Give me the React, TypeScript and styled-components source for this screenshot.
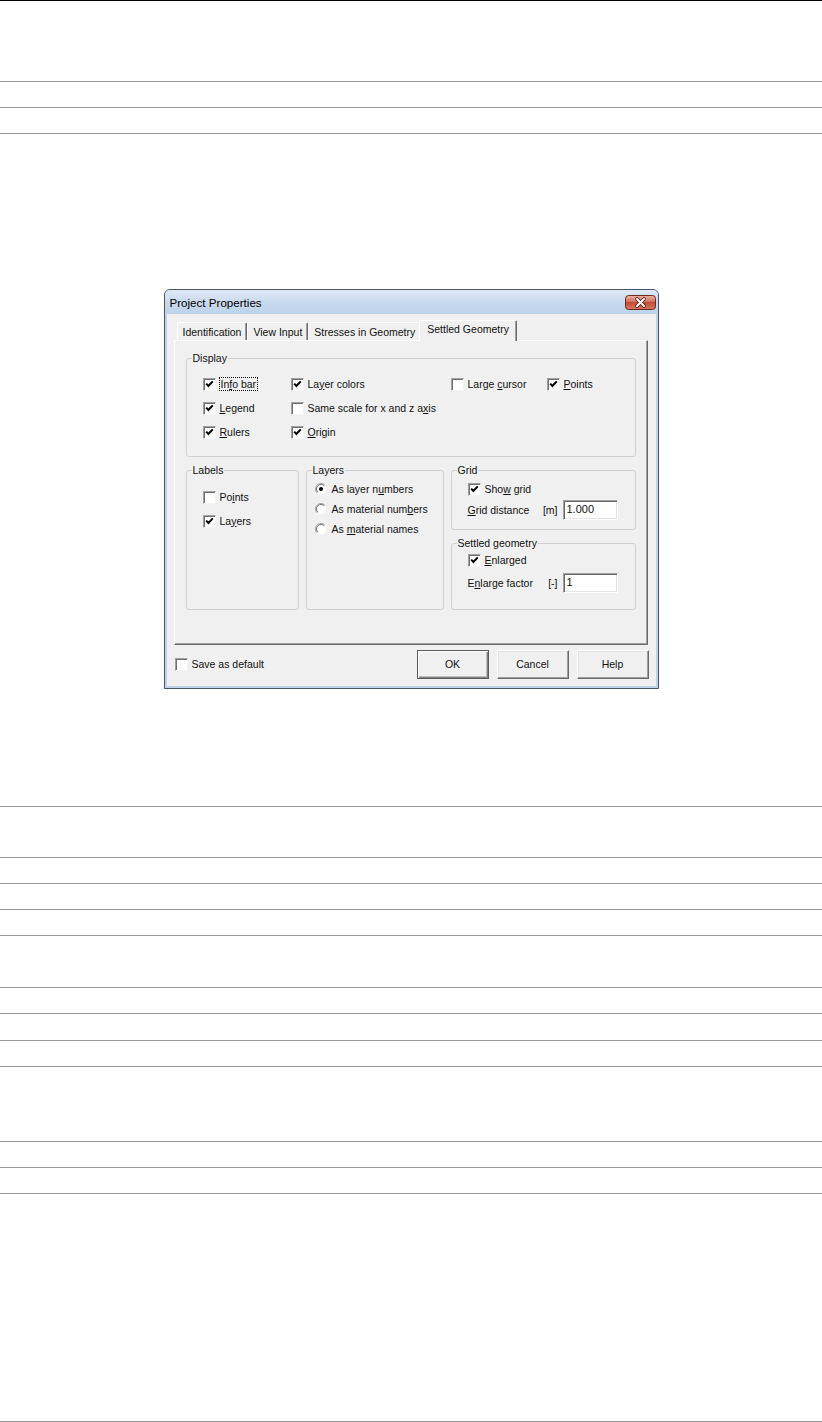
import React from "react";
import styled, { createGlobalStyle } from "styled-components";

const GlobalStyle = createGlobalStyle`
  html, body {
    margin: 0;
    padding: 0;
    background: #fff;
  }
  body {
    font-family: "Liberation Sans", Arial, sans-serif;
  }
`;

/* ---------- page (empty table rows) ---------- */

const Sheet = styled.div`
  width: 822px;
  display: flex;
  flex-direction: column;
  border-top: 1px solid #000;
`;

const Row = styled.div<{ $h: number }>`
  box-sizing: border-box;
  height: ${(p) => p.$h}px;
  border-bottom: 1px solid #999;
`;

const FigureRow = styled(Row)`
  display: flex;
  justify-content: center;
  align-items: flex-start;
  padding-top: 155px;
`;

/* ---------- dialog window ---------- */

const Window = styled.div`
  width: 493px;
  display: flex;
  flex-direction: column;
  border: 1px solid #4a5562;
  border-radius: 6px 6px 0 0;
  background: #c0d3ea;
  font-family: "Liberation Sans", Arial, sans-serif;
  font-size: 10.5px;
  line-height: 13px;
  color: #111;
  overflow: hidden;
`;

const TitleBar = styled.div`
  height: 24px;
  display: flex;
  align-items: center;
  justify-content: space-between;
  padding: 0 2px 0 5px;
  background: linear-gradient(#dfe9f5, #c8d9ee 55%, #bdd2ea);
`;

const Title = styled.span`
  font-size: 11.6px;
  color: #000;
`;

const Client = styled.div`
  margin: 0 2px 2px 2px;
  height: 372px;
  box-sizing: border-box;
  background: #f0f0f0;
  display: flex;
  flex-direction: column;
  padding: 6px 6px 7px 7px;
`;

const TabStrip = styled.div`
  height: 20px;
  display: flex;
  align-items: flex-end;
  padding-left: 3px;
  position: relative;
  z-index: 1;
`;

const Tab = styled.div<{ $active?: boolean }>`
  box-sizing: border-box;
  height: ${(p) => (p.$active ? 21 : 18)}px;
  margin: ${(p) => (p.$active ? "0 -2px -1px -2px" : "0")};
  padding: ${(p) => (p.$active ? "2px 7px 0 7px" : "3px 5px 0 5px")};
  background: #f0f0f0;
  border-top: 1px solid #fff;
  border-left: 1px solid #fff;
  border-right: 1px solid #696969;
  border-radius: 2px 2px 0 0;
  box-shadow: inset -1px 0 0 #a0a0a0;
  white-space: nowrap;
`;

const Panel = styled.div`
  box-sizing: border-box;
  width: 474px;
  height: 305px;
  display: flex;
  flex-direction: column;
  gap: 7px;
  padding: 11px 11px 0 11px;
  border-top: 1px solid #fff;
  border-left: 1px solid #fff;
  border-right: 1px solid #696969;
  border-bottom: 1px solid #696969;
  box-shadow: inset -1px -1px 0 #a0a0a0;
`;

const Group = styled.fieldset<{ $grow?: boolean }>`
  margin: 0;
  padding: 0;
  min-width: 0;
  box-sizing: border-box;
  border: 1px solid #d0d0d0;
  border-radius: 3px;
  ${(p) => (p.$grow ? "flex: 1;" : "")}
`;

const Legend = styled.legend`
  margin-left: 5px;
  padding: 0 1px;
  line-height: 13px;
`;

const GroupBody = styled.div<{ $pad: string }>`
  padding: ${(p) => p.$pad};
`;

const DisplayGrid = styled.div`
  display: grid;
  grid-template-columns: 88px 160px 96px auto;
  grid-auto-rows: 24px;
`;

const LowerRow = styled.div`
  height: 146px;
  display: grid;
  grid-template-columns: 113px 138px 185px;
  column-gap: 7px;
`;

const RightColumn = styled.div`
  display: flex;
  flex-direction: column;
  gap: 7px;
`;

const Item = styled.label<{ $h?: number }>`
  height: ${(p) => p.$h ?? 24}px;
  display: flex;
  align-items: center;
  gap: 4px;
  white-space: nowrap;
`;

const RadioItem = styled(Item)`
  gap: 5px;
`;

const Box = styled.span`
  box-sizing: border-box;
  width: 13px;
  height: 13px;
  flex: none;
  display: inline-flex;
  background: #fff;
  border: 1px solid;
  border-color: #a0a0a0 #f4f4f4 #f4f4f4 #a0a0a0;
  box-shadow: inset 1px 1px 0 #707070;
`;

const Focus = styled.span`
  outline: 1px dotted #000;
  outline-offset: 0;
  padding: 0 1px;
`;

const FieldRow = styled.div<{ $mt?: number }>`
  height: 22px;
  margin-top: ${(p) => p.$mt ?? 0}px;
  display: flex;
  align-items: center;
  white-space: nowrap;
`;

const FieldLabel = styled.span`
  flex: 1;
`;

const Unit = styled.span`
  margin-right: 5px;
`;

const TextInput = styled.div`
  box-sizing: border-box;
  width: 55px;
  height: 20px;
  padding: 2px 3px 0 3px;
  background: #fff;
  border: 1px solid;
  border-color: #a0a0a0 #fff #fff #a0a0a0;
  box-shadow: inset 1px 1px 0 #696969, inset -1px -1px 0 #e3e3e3;
  font-size: 11px;
`;

const Footer = styled.div`
  margin-top: 5px;
  height: 29px;
  display: flex;
  align-items: center;
  padding-left: 1px;
  padding-right: 1px;
`;

const FooterCheck = styled(Item)`
  flex: 1;
`;

const Buttons = styled.div`
  display: flex;
  gap: 8px;
  height: 100%;
`;

const Button = styled.button<{ $default?: boolean }>`
  box-sizing: border-box;
  width: 72px;
  height: 29px;
  font: inherit;
  color: #111;
  background: #f0f0f0;
  border: 1px solid;
  border-color: ${(p) =>
    p.$default ? "#5a5a5a" : "#fff #696969 #696969 #fff"};
  box-shadow: ${(p) =>
    p.$default
      ? "inset 1px 1px 0 #fff, inset -1px -1px 0 #808080, inset -2px -2px 0 #c0c0c0"
      : "inset -1px -1px 0 #a0a0a0, inset 1px 1px 0 #e3e3e3"};
  padding: 0;
`;

/* ---------- little drawings ---------- */

const CloseGlyph = () => (
  <svg width="31" height="15" viewBox="0 0 31 15">
    <defs>
      <linearGradient id="cls" x1="0" y1="0" x2="0" y2="1">
        <stop offset="0" stopColor="#eab2a4" />
        <stop offset="0.45" stopColor="#d2725f" />
        <stop offset="0.5" stopColor="#c44a36" />
        <stop offset="1" stopColor="#d77a5e" />
      </linearGradient>
    </defs>
    <rect x="0.5" y="0.5" width="30" height="14" rx="3" fill="url(#cls)" stroke="#6b2a1f" />
    <path d="M12 4 L19 11 M19 4 L12 11" stroke="#4a1c14" strokeWidth="3.6" strokeLinecap="round" />
    <path d="M12 4 L19 11 M19 4 L12 11" stroke="#fff" strokeWidth="2" strokeLinecap="round" />
  </svg>
);

const Check = ({ on }: { on?: boolean }) => (
  <Box>
    {on && (
      <svg width="11" height="11" viewBox="0 0 11 11">
        <path d="M2.2 4.6 L4.4 7 L8.8 2.4" fill="none" stroke="#000" strokeWidth="2" />
      </svg>
    )}
  </Box>
);

const Radio = ({ on }: { on?: boolean }) => (
  <svg width="12" height="12" viewBox="0 0 12 12" style={{ flex: "none" }}>
    <circle cx="6" cy="6" r="5.5" fill="#fff" />
    <path d="M2.1 9.9 A5.5 5.5 0 0 1 9.9 2.1" fill="none" stroke="#a0a0a0" />
    <path d="M9.9 2.1 A5.5 5.5 0 0 1 2.1 9.9" fill="none" stroke="#f4f4f4" />
    <path d="M2.8 9.2 A4.5 4.5 0 0 1 9.2 2.8" fill="none" stroke="#707070" />
    {on && <circle cx="6" cy="6" r="2" fill="#000" />}
  </svg>
);

/* ---------- data ---------- */

const rowsBefore = [81, 26, 26];
const rowsAfter = [51, 26, 26, 26, 52, 26, 27, 26, 75, 26, 26, 228];

type Opt = { on: boolean; label: React.ReactNode };

const display: Opt[] = [
  { on: true, label: <Focus>In<u>f</u>o bar</Focus> },
  { on: true, label: <>La<u>y</u>er colors</> },
  { on: false, label: <>Large <u>c</u>ursor</> },
  { on: true, label: <><u>P</u>oints</> },
  { on: true, label: <><u>L</u>egend</> },
  { on: false, label: <>Same scale for x and z a<u>x</u>is</> },
  { on: false, label: null },
  { on: false, label: null },
  { on: true, label: <><u>R</u>ulers</> },
  { on: true, label: <><u>O</u>rigin</> },
];

const ProjectProperties = () => (
  <Window>
    <TitleBar>
      <Title>Project Properties</Title>
      <CloseGlyph />
    </TitleBar>
    <Client>
      <TabStrip>
        <Tab>Identification</Tab>
        <Tab>View Input</Tab>
        <Tab>Stresses in Geometry</Tab>
        <Tab $active>Settled Geometry</Tab>
      </TabStrip>
      <Panel>
        <Group>
          <Legend>Display</Legend>
          <GroupBody $pad="7px 0 12px 16px">
            <DisplayGrid>
              {display.map((d, i) =>
                d.label ? (
                  <Item key={i}>
                    <Check on={d.on} />
                    <span>{d.label}</span>
                  </Item>
                ) : (
                  <span key={i} />
                )
              )}
            </DisplayGrid>
          </GroupBody>
        </Group>

        <LowerRow>
          <Group>
            <Legend>Labels</Legend>
            <GroupBody $pad="8px 0 0 16px">
              <Item>
                <Check />
                <span>Po<u>i</u>nts</span>
              </Item>
              <Item>
                <Check on />
                <span>La<u>y</u>ers</span>
              </Item>
            </GroupBody>
          </Group>

          <Group>
            <Legend>Layers</Legend>
            <GroupBody $pad="2px 0 0 8px">
              <RadioItem $h={20}>
                <Radio on />
                <span>As layer n<u>u</u>mbers</span>
              </RadioItem>
              <RadioItem $h={20}>
                <Radio />
                <span>As material num<u>b</u>ers</span>
              </RadioItem>
              <RadioItem $h={20}>
                <Radio />
                <span>As <u>m</u>aterial names</span>
              </RadioItem>
            </GroupBody>
          </Group>

          <RightColumn>
            <Group>
              <Legend>Grid</Legend>
              <GroupBody $pad="2px 17px 8px 16px">
                <Item $h={20}>
                  <Check on />
                  <span>Sho<u>w</u> grid</span>
                </Item>
                <FieldRow>
                  <FieldLabel><u>G</u>rid distance</FieldLabel>
                  <Unit>[m]</Unit>
                  <TextInput>1.000</TextInput>
                </FieldRow>
              </GroupBody>
            </Group>
            <Group $grow>
              <Legend>Settled geometry</Legend>
              <GroupBody $pad="0 17px 0 16px">
                <Item $h={20}>
                  <Check on />
                  <span><u>E</u>nlarged</span>
                </Item>
                <FieldRow $mt={2}>
                  <FieldLabel>E<u>n</u>large factor</FieldLabel>
                  <Unit>[-]</Unit>
                  <TextInput>1</TextInput>
                </FieldRow>
              </GroupBody>
            </Group>
          </RightColumn>
        </LowerRow>
      </Panel>

      <Footer>
        <FooterCheck>
          <Check />
          <span>Save as default</span>
        </FooterCheck>
        <Buttons>
          <Button $default>OK</Button>
          <Button>Cancel</Button>
          <Button>Help</Button>
        </Buttons>
      </Footer>
    </Client>
  </Window>
);

export default function App() {
  return (
    <>
      <GlobalStyle />
      <Sheet>
        {rowsBefore.map((h, i) => (
          <Row key={`b${i}`} $h={h} />
        ))}
        <FigureRow $h={673}>
          <ProjectProperties />
        </FigureRow>
        {rowsAfter.map((h, i) => (
          <Row key={`a${i}`} $h={h} />
        ))}
      </Sheet>
    </>
  );
}
